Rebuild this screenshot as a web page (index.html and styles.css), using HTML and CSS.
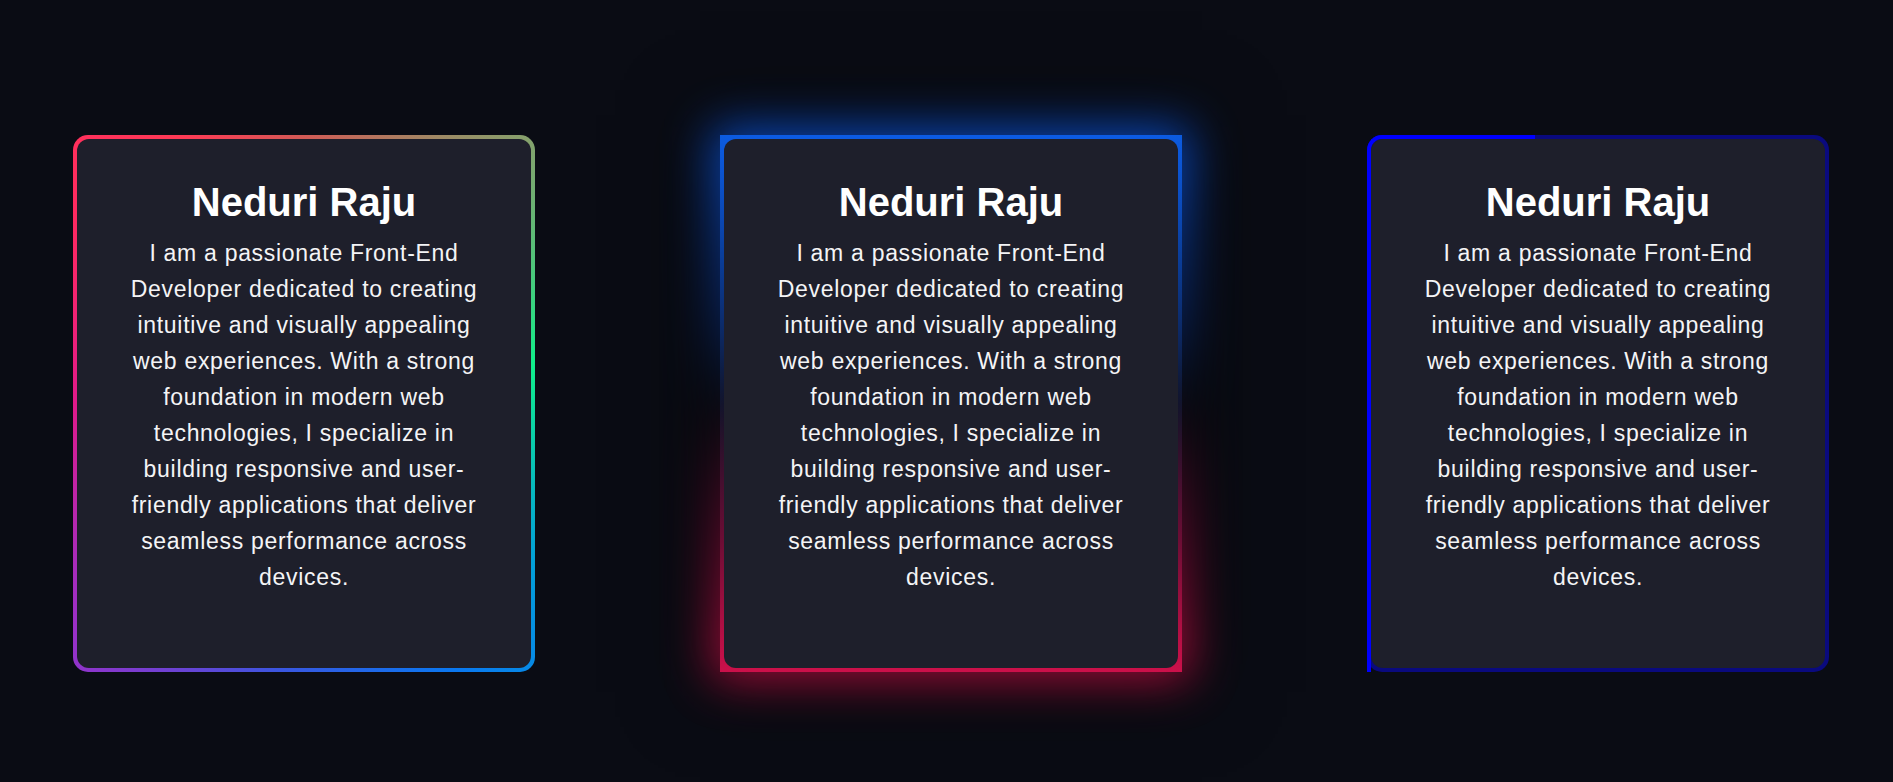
FILE: index.html
```html
<!DOCTYPE html>
<html lang="en">
<head>
<meta charset="UTF-8">
<title>Cards</title>
<link rel="stylesheet" href="styles.css">
</head>
<body>
  <main class="cards">
    <article class="card card--conic">
      <div class="card__inner">
        <h2 class="card__title">Neduri Raju</h2>
        <p class="card__text">I am a passionate Front-End Developer dedicated to creating intuitive and visually appealing web experiences. With a strong foundation in modern web technologies, I specialize in building responsive and user-friendly applications that deliver seamless performance across devices.</p>
      </div>
    </article>
    <article class="card card--glow">
      <div class="card__inner">
        <h2 class="card__title">Neduri Raju</h2>
        <p class="card__text">I am a passionate Front-End Developer dedicated to creating intuitive and visually appealing web experiences. With a strong foundation in modern web technologies, I specialize in building responsive and user-friendly applications that deliver seamless performance across devices.</p>
      </div>
    </article>
    <article class="card card--trace">
      <span class="card__trace"></span>
      <div class="card__inner">
        <h2 class="card__title">Neduri Raju</h2>
        <p class="card__text">I am a passionate Front-End Developer dedicated to creating intuitive and visually appealing web experiences. With a strong foundation in modern web technologies, I specialize in building responsive and user-friendly applications that deliver seamless performance across devices.</p>
      </div>
    </article>
  </main>
</body>
</html>
```

FILE: styles.css
```css
* {
  box-sizing: border-box;
}

html, body {
  margin: 0;
  padding: 0;
}

body {
  background: #0a0c14;
  font-family: "Liberation Sans", Arial, sans-serif;
  color: #ffffff;
  min-height: 782px;
}

.cards {
  display: flex;
  align-items: flex-start;
  gap: 185px;
  padding: 135px 0 0 73px;
}

.card {
  position: relative;
  width: 462px;
  height: 537px;
  padding: 4px;
  flex: none;
}

.card__inner {
  position: relative;
  height: 100%;
  background: #1e1f2b;
  border-radius: 12px;
  padding: 40px 44px 0;
  text-align: center;
  z-index: 1;
}

.card__title {
  margin: 0 0 10px;
  font-size: 40px;
  font-weight: 700;
  line-height: 46px;
}

.card__text {
  margin: 0;
  font-size: 23px;
  line-height: 36px;
  letter-spacing: 0.7px;
  color: #f4f4f6;
}

/* Card 1: conic gradient border */
.card--conic {
  border-radius: 15px;
  background: conic-gradient(from 0deg,
    #d25a55 0deg,
    #86a06c 40deg,
    #10f08a 80deg,
    #02a0d8 125deg,
    #0a78f0 150deg,
    #3a56e0 185deg,
    #9a30c8 225deg,
    #e01a8a 270deg,
    #ff2a60 310deg,
    #ff3a55 335deg,
    #d25a55 360deg);
}

/* Card 2: glowing square frame */
.card--glow {
  background: linear-gradient(to bottom, #0c5bd8 0%, #0b3c8e 25%, #141a3a 50%, #5a1035 75%, #c8124c 100%);
  box-shadow: 0 0 70px 20px rgba(0, 0, 0, 0.55);
}

.card--glow::before {
  content: "";
  position: absolute;
  inset: -8px;
  background: linear-gradient(to bottom, #0d62ff 0%, #0a2a70 35%, #0a0c14 50%, #6a0a30 70%, #e0104c 100%);
  filter: blur(24px);
  opacity: 0.75;
  z-index: 0;
}

/* Card 3: tracing border */
.card--trace {
  border-radius: 15px;
  background: #0a0a7e;
}

.card__trace {
  position: absolute;
  left: 0;
  top: 0;
  width: 168px;
  height: 100%;
  border-top: 4px solid #0000ff;
  border-left: 4px solid #0000ff;
  border-top-left-radius: 15px;
}
```
